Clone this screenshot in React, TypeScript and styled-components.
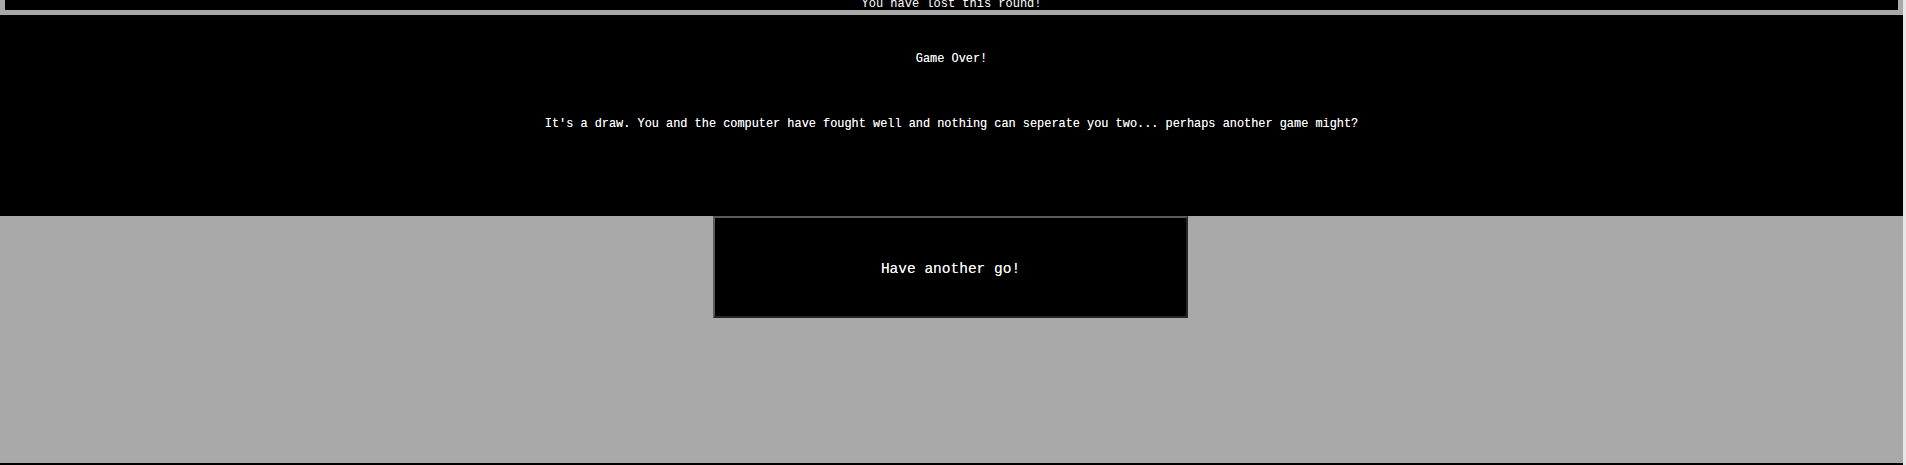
import React from "react";
import styled, { createGlobalStyle } from "styled-components";

const Global = createGlobalStyle`
  html, body { margin: 0; padding: 0; background: #e6e6e6; overflow: hidden; }
  * { box-sizing: border-box; }
`;

const Page = styled.div`
  width: 1903px;
  height: 465px;
  background: #a9a9a9;
  display: flex;
  flex-direction: column;
  overflow: hidden;
  font-family: "Liberation Mono", "DejaVu Sans Mono", monospace;
  color: #ffffff;
  border-bottom: 2px solid #000;
`;

const RoundBar = styled.div`
  height: 15px;
  background: #000;
  border: 5px solid #a9a9a9;
  border-top: 0;
  display: flex;
  justify-content: center;
  align-items: flex-start;
  overflow: hidden;
`;

const RoundText = styled.span`
  font-size: 12px;
  line-height: 8px;
  height: 10px;
  white-space: nowrap;
`;

const ResultPanel = styled.section`
  height: 201px;
  background: #000;
  display: flex;
  flex-direction: column;
  align-items: center;
  padding-top: 37px;
  gap: 51px;
`;

const Line = styled.p`
  margin: 0;
  font-size: 11.9px;
  line-height: 14px;
  white-space: nowrap;
  text-shadow: 0 0 0.2px rgba(255, 255, 255, 0.6);
`;

const Actions = styled.div`
  display: flex;
  justify-content: center;
  padding-right: 2px;
`;

const AgainButton = styled.button`
  width: 475px;
  height: 102px;
  background: #000;
  color: #fff;
  font-family: "Liberation Mono", "DejaVu Sans Mono", monospace;
  font-size: 14.5px;
  border-style: solid;
  border-width: 2px;
  border-color: #5c5c5c #262626 #262626 #5c5c5c;
  padding: 4px 0 0 0;
  text-shadow: 0 0 0.2px rgba(255, 255, 255, 0.6);
  cursor: pointer;
`;

export default function App() {
  return (
    <>
      <Global />
      <Page>
        <RoundBar>
          <RoundText>You have lost this round!</RoundText>
        </RoundBar>
        <ResultPanel>
          <Line>Game Over!</Line>
          <Line>
            It's a draw. You and the computer have fought well and nothing can seperate you two... perhaps another game might?
          </Line>
        </ResultPanel>
        <Actions>
          <AgainButton>Have another go!</AgainButton>
        </Actions>
      </Page>
    </>
  );
}
